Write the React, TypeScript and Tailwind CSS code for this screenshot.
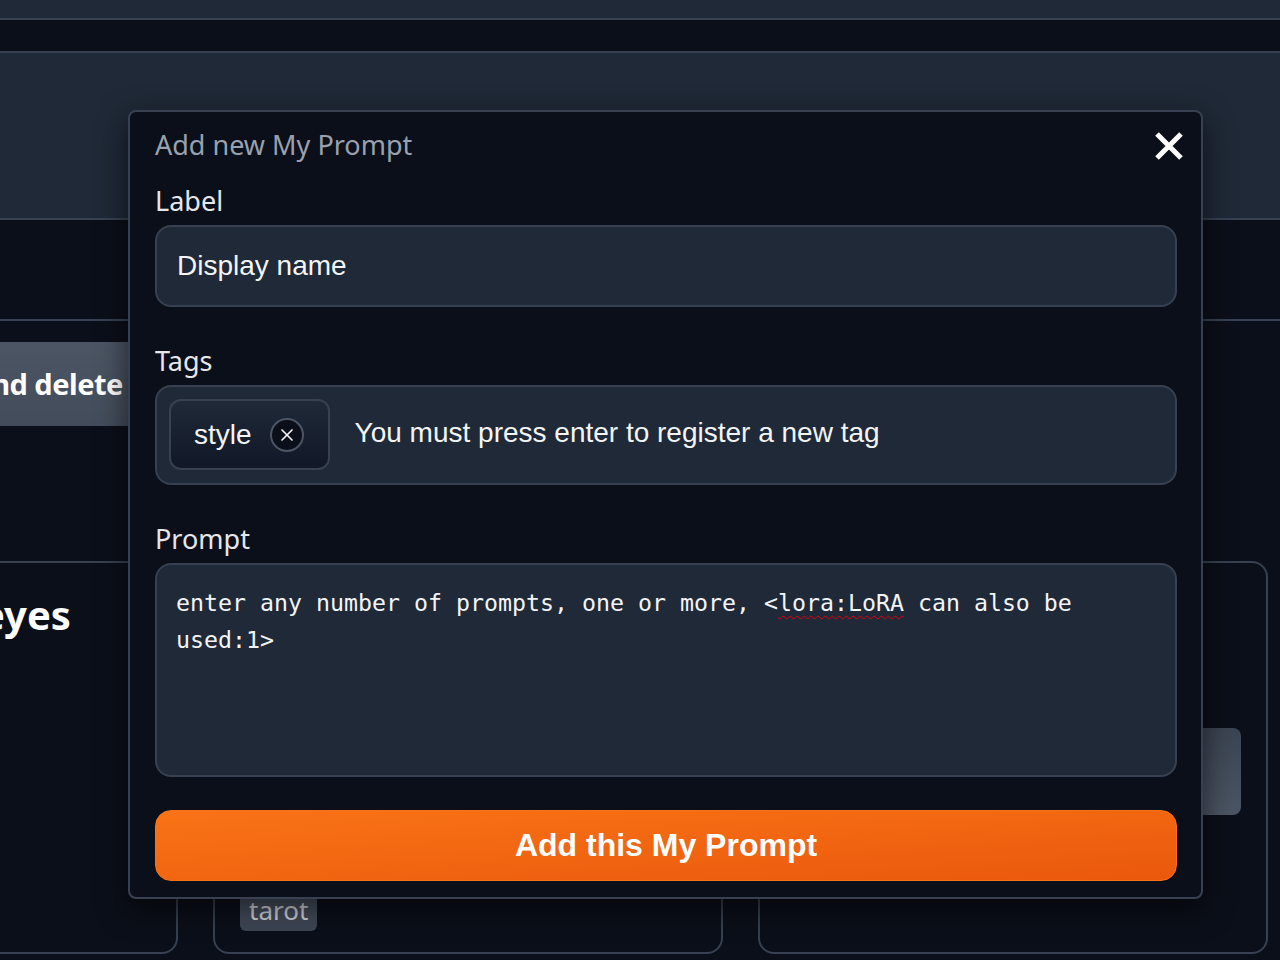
import { X } from "lucide-react";

function PageBehind() {
  return (
    <div className="flex flex-col">
      <div className="h-[20px] border-b-2 border-[#374151] bg-[#1f2937]" />
      <div className="h-[33px] border-b-2 border-[#374151] bg-[#0b0f19]" />
      <div className="h-[167px] border-b-2 border-[#374151] bg-[#1f2937]" />
      <div className="h-[101px] border-b-2 border-[#374151]" />

      {/* toolbar button, mostly hidden by the dialog */}
      <div className="mt-[21px] flex">
        <button className="ml-[-120px] flex h-[84px] w-[420px] items-center rounded-lg bg-gradient-to-b from-[#4b5563] to-[#434c5a] pl-[32px] text-[29px] font-bold tracking-[-0.5px] text-white">
          Add and delete labels
        </button>
      </div>

      <div className="mt-[135px] flex gap-[35px] ml-[-332px]">
        <div className="h-[393px] w-[510px] shrink-0 rounded-2xl border-2 border-[#374151] pt-[28px] pl-[79px]">
          <h3 className="text-[40px] font-bold leading-[48px] text-white">Half-closed eyes</h3>
        </div>
        <div className="flex h-[393px] w-[510px] shrink-0 flex-col justify-end rounded-2xl border-2 border-[#374151] pb-[21px] pl-[25px]">
          <span className="w-fit rounded-md bg-gradient-to-b from-[#4b5563] to-[#3d4553] px-[9px] pb-[5px] text-[26px] leading-[32px] text-gray-300">
            tarot
          </span>
        </div>
        <div className="h-[393px] w-[510px] shrink-0 rounded-2xl border-2 border-[#374151] px-[25px] pt-[165px]">
          <div className="h-[87px] rounded-lg bg-gradient-to-b from-[#3b4452] to-[#4b5563]" />
        </div>
      </div>
    </div>
  );
}

function Field({ label, children }: { label: string; children: React.ReactNode }) {
  return (
    <div>
      <label className="block text-[27px] leading-9 text-gray-200">{label}</label>
      <div className="mt-[6px]">{children}</div>
    </div>
  );
}

function AddPromptModal() {
  return (
    <div className="absolute left-[128px] top-[110px] flex h-[789px] w-[1075px] flex-col rounded-lg border-2 border-[#374151] bg-[#0b0f19] pl-[25px] pr-[24px] pt-[15px] pb-[16px] shadow-[0_10px_30px_rgba(0,0,0,0.6)]">
      <button className="absolute right-[17px] top-[19px] text-white">
        <svg width="30" height="30" viewBox="0 0 30 30">
          <path d="M3 3 L27 27 M27 3 L3 27" stroke="currentColor" strokeWidth="5" />
        </svg>
      </button>

      <h2 className="text-[27px] leading-9 text-gray-400">Add new My Prompt</h2>

      <div className="mt-[20px] flex flex-col gap-[36px]">
        <Field label="Label">
          <input
            placeholder="Display name"
            className="h-[82px] w-full rounded-2xl border-2 border-[#374151] bg-[#1f2937] px-[20px] font-['Liberation_Sans',Arial,sans-serif] text-[28px] text-gray-100 placeholder:text-gray-100 outline-none"
          />
        </Field>

        <Field label="Tags">
          <div className="flex h-[100px] items-start gap-[25px] rounded-2xl border-2 border-[#374151] bg-[#1f2937] px-[12px] pt-[12px] font-['Liberation_Sans',Arial,sans-serif]">
            <div className="flex h-[71px] items-center gap-[18px] rounded-xl border-2 border-[#374151] bg-gradient-to-b from-[#1f2937] to-[#111827] pl-[23px] pr-[24px]">
              <span className="text-[28px] text-gray-100">style</span>
              <span className="flex h-[34px] w-[34px] items-center justify-center rounded-full border-2 border-[#4b5563] bg-[#0b0f19] text-gray-100">
                <X className="h-[20px] w-[20px]" strokeWidth={2} />
              </span>
            </div>
            <input
              placeholder="You must press enter to register a new tag"
              className="h-[68px] flex-1 bg-transparent text-[28px] text-gray-100 placeholder:text-gray-100 outline-none"
            />
          </div>
        </Field>

        <Field label="Prompt">
          <div className="h-[214px] rounded-2xl border-2 border-[#374151] bg-[#1f2937] px-[19px] pt-[19px] font-['DejaVu_Sans_Mono',monospace] text-[23.25px] leading-[37px] text-gray-100">
            enter any number of prompts, one or more, &lt;
            <span className="underline decoration-wavy decoration-red-600 decoration-1 underline-offset-4">lora:LoRA</span>{" "}
            can also be used:1&gt;
          </div>
        </Field>
      </div>

      <button className="mt-[33px] h-[71px] w-full rounded-2xl border border-[#f97316] bg-gradient-to-br from-[#f97316] to-[#ea580c] pb-[2px] font-['Liberation_Sans',Arial,sans-serif] text-[32px] font-bold text-white">
        Add this My Prompt
      </button>
    </div>
  );
}

export default function App() {
  return (
    <div className="relative h-[960px] w-full overflow-hidden bg-[#0b0f19] font-['Noto_Sans',sans-serif] text-gray-200">
      <PageBehind />
      <AddPromptModal />
    </div>
  );
}
